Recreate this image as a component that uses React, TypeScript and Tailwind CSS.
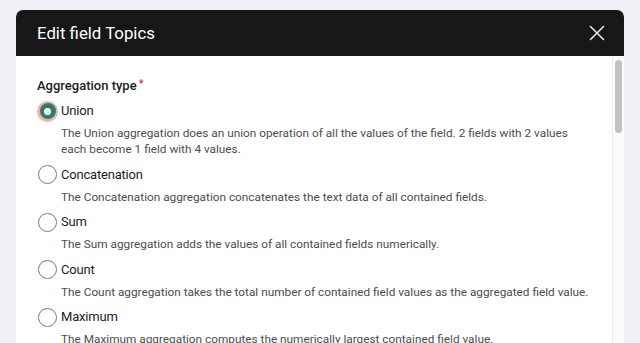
import React from "react";

const options = [
  {
    label: "Union",
    desc: "The Union aggregation does an union operation of all the values of the field. 2 fields with 2 values each become 1 field with 4 values.",
    selected: true,
  },
  { label: "Concatenation", desc: "The Concatenation aggregation concatenates the text data of all contained fields." },
  { label: "Sum", desc: "The Sum aggregation adds the values of all contained fields numerically." },
  { label: "Count", desc: "The Count aggregation takes the total number of contained field values as the aggregated field value." },
  { label: "Maximum", desc: "The Maximum aggregation computes the numerically largest contained field value." },
  { label: "Minimum", desc: "The Minimum aggregation computes the numerically smallest contained field value." },
];

export default function App() {
  return (
    <div
      className="w-[640px] h-[343px] overflow-hidden bg-[#eef0f5] pt-[10px] px-[16px]"
      style={{ fontFamily: "Roboto, 'Noto Sans', sans-serif" }}
    >
      <div className="h-[400px] rounded-t-[7px] overflow-hidden bg-white flex flex-col">
        <div className="h-[46px] bg-[#171717] flex items-center justify-between pl-[21px] pr-[19px] shrink-0">
          <span className="text-white text-[16.8px] leading-none">Edit field Topics</span>
          <svg width="16" height="16" viewBox="0 0 16 16" fill="none">
            <path d="M1.5 1.5L14.5 14.5M14.5 1.5L1.5 14.5" stroke="#e6e6e6" strokeWidth="1.6" strokeLinecap="round" />
          </svg>
        </div>
        <div className="flex flex-1">
          <div className="flex-1 pl-[21px] pt-[20px]">
            <div className="text-[13px] font-medium text-[#1c1c1c] leading-[20px] flex">
              Aggregation type<span className="text-[#c0394b] text-[11px] leading-[14px] mt-[1px] ml-[2px]">*</span>
            </div>
            <div className="mt-[5px] flex flex-col">
              {options.map((o) => (
                <div key={o.label} className="flex flex-col mb-[7.5px]">
                  <div className="flex items-center h-[20px]">
                    {o.selected ? (
                      <span className="w-[21px] h-[21px] rounded-full bg-[#e9b6a4] flex items-center justify-center">
                        <span className="w-[16px] h-[16px] rounded-full bg-[#2e7a6f] flex items-center justify-center">
                          <span className="w-[7px] h-[7px] rounded-full bg-white" />
                        </span>
                      </span>
                    ) : (
                      <span className="w-[21px] h-[20px] flex items-center justify-center">
                        <span className="w-[19px] h-[19px] rounded-full border border-[#7a7a7a] bg-white" />
                      </span>
                    )}
                    <span className="ml-[3px] text-[13px] tracking-[-0.2px] text-[#1c1c1c]">{o.label}</span>
                  </div>
                  <p className="ml-[24px] mt-[4px] text-[11.8px] leading-[16px] text-[#4d4d4d] max-w-[529px]">{o.desc}</p>
                </div>
              ))}
            </div>
          </div>
          <div className="w-[12px] border-l border-[#ececec] bg-[#fbfbfb] flex justify-center pt-[4px]">
            <div className="w-[7px] h-[73px] rounded-full bg-[#c2c2c2]" />
          </div>
        </div>
      </div>
    </div>
  );
}
